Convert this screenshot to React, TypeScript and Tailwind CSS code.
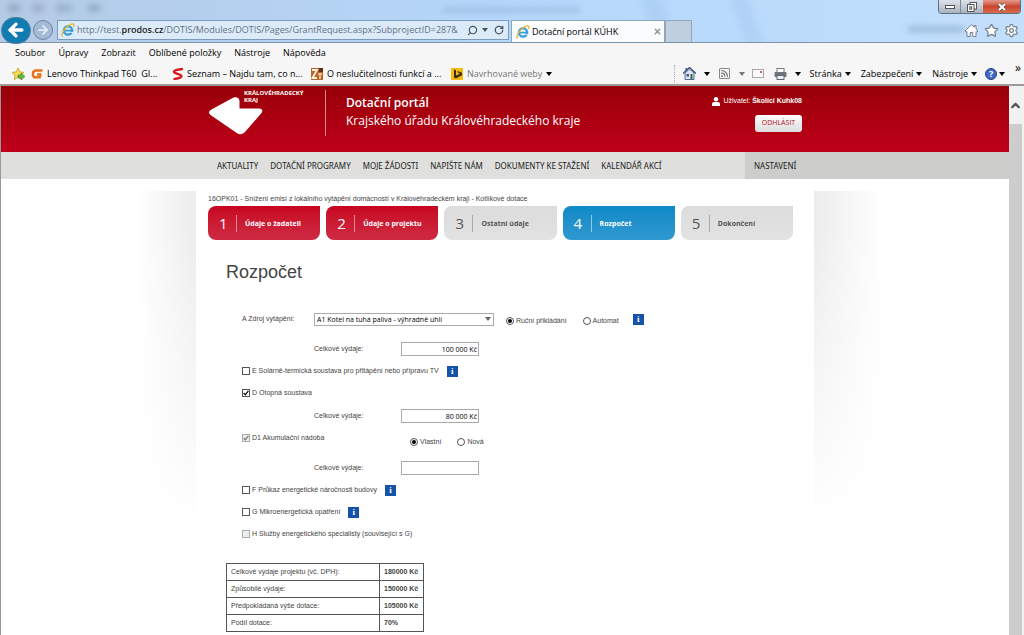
import { useState, type ReactNode } from 'react';
import { ArrowLeft, ArrowRight, Star, Settings, Search, RotateCw, Rss, X, ChevronUp } from 'lucide-react';

const MENU = ['Soubor', 'Úpravy', 'Zobrazit', 'Oblíbené položky', 'Nástroje', 'Nápověda'];
const NAV = ['AKTUALITY', 'DOTAČNÍ PROGRAMY', 'MOJE ŽÁDOSTI', 'NAPIŠTE NÁM', 'DOKUMENTY KE STAŽENÍ', 'KALENDÁŘ AKCÍ'];

const STEPS = [
  { label: 'Údaje o žadateli', state: 'done' },
  { label: 'Údaje o projektu', state: 'done' },
  { label: 'Ostatní údaje', state: 'idle' },
  { label: 'Rozpočet', state: 'current' },
  { label: 'Dokončení', state: 'idle' },
];

const SUMMARY = [
  ['Celkové výdaje projektu (vč. DPH):', '180000 Kč'],
  ['Způsobilé výdaje:', '150000 Kč'],
  ['Předpokládaná výše dotace:', '105000 Kč'],
  ['Podíl dotace:', '70%'],
];

function IeIcon() {
  return (
    <svg viewBox="0 0 14 14" className="h-[14px] w-[14px] shrink-0">
      <circle cx="7" cy="7.4" r="4.1" fill="none" stroke="#3aa0dc" strokeWidth="2.4" />
      <path d="M3.5 7.6h8" stroke="#3aa0dc" strokeWidth="1.8" />
      <path d="M9 9h4v2.2z" fill="#e4eefa" />
      <path d="M1.4 12.8C-.4 10.4 4.6 3.6 9.4 1.4c3-1.3 4.2-.2 3.2 2" fill="none" stroke="#e9b62c" strokeWidth="1.3" strokeLinecap="round" />
    </svg>
  );
}

function Caret({ className = 'text-black' }: { className?: string }) {
  return (
    <svg viewBox="0 0 6 4" className={`h-1 w-[6px] shrink-0 ${className}`}>
      <path d="M0 0h6L3 4z" fill="currentColor" />
    </svg>
  );
}

function WindowControls() {
  return (
    <div className="absolute top-0 right-[3px] flex h-[14px] overflow-hidden rounded-b border border-t-0 border-[#5f6f83]">
      <button aria-label="Minimalizovat" className="flex w-[22px] items-end justify-center border-r border-[#7f8b9a] bg-linear-to-b from-[#dde3ea] to-[#a9b4c2] pb-1">
        <svg viewBox="0 0 10 4" className="h-1 w-[10px]">
          <rect x=".5" y=".5" width="9" height="3" fill="#fff" stroke="#555" />
        </svg>
      </button>
      <button aria-label="Obnovit" className="flex w-[22px] items-center justify-center bg-linear-to-b from-[#dde3ea] to-[#a9b4c2]">
        <svg viewBox="0 0 10 10" className="h-[10px] w-[10px]" fill="#fff" stroke="#555">
          <rect x="3" y=".5" width="6.5" height="6.5" />
          <rect x=".5" y="2.5" width="6.5" height="7" />
          <rect x="2.7" y="4.8" width="2" height="2.4" />
        </svg>
      </button>
      <button aria-label="Zavřít" className="flex w-[37px] items-center justify-center bg-linear-to-b from-[#e39a8b] via-[#c9452c] to-[#d8694f]">
        <svg viewBox="0 0 10 8" className="h-2 w-[10px]">
          <path d="M2 1l6 6M8 1L2 7" stroke="#555" strokeWidth="3.2" />
          <path d="M2 1l6 6M8 1L2 7" stroke="#fff" strokeWidth="2" />
        </svg>
      </button>
    </div>
  );
}

function TitleBar() {
  return (
    <div className="relative flex h-[43px] items-end border-b border-[#7d93a8] bg-linear-to-r from-[#b4cbe6] via-[#b5d7fb] to-[#c2dffc]">
      {/* windows showing through the glass frame */}
      <div aria-hidden="true" className="absolute inset-0 overflow-hidden">
        <div className="absolute top-1 left-2 h-2 w-3 bg-[#71869f] opacity-50 blur-[3px]" />
        <div className="absolute top-1 left-8 h-2 w-3 bg-[#8d90b5] opacity-50 blur-[3px]" />
        <div className="absolute top-1 left-14 h-2 w-4 bg-[#7f96b3] opacity-50 blur-[3px]" />
        <div className="absolute top-1 left-[88px] h-2 w-3 bg-[#71869f] opacity-50 blur-[3px]" />
        <div className="absolute top-2 left-[443px] h-1 w-[137px] bg-[#7d9cc0] opacity-50 blur-[3px]" />
        <div className="absolute top-[27px] left-[908px] h-1 w-[56px] bg-[#6685a6] opacity-60 blur-[3px]" />
        <div className="absolute -top-2 left-[740px] h-16 w-4 -rotate-20 bg-[#9cc3ec] opacity-40 blur-[4px]" />
        <div className="absolute -top-2 left-[650px] h-16 w-5 -rotate-20 bg-[#9cc3ec] opacity-40 blur-[4px]" />
      </div>

      <button aria-label="Zpět" className="relative mb-[-1px] flex h-[26px] w-[31px] items-center justify-center overflow-visible">
        <span className="flex h-[27px] w-[30px] shrink-0 items-center justify-center rounded-[14px] border border-[#4c7ea0] bg-[#117cb0]">
          <ArrowLeft size={20} strokeWidth={4} className="text-white" />
        </span>
      </button>
      <button aria-label="Vpřed" className="relative mb-[2px] ml-[2px] flex h-5 w-5 items-center justify-center rounded-full border border-[#6d84a0] bg-[#a5bad4]">
        <ArrowRight size={14} strokeWidth={3} className="text-[#e4ecf5]" />
      </button>

      <div className="relative mb-[2px] ml-1 flex h-[20px] w-[452px] items-center border border-[#7f9ab8] bg-[#dcebfa] pr-1 pl-[3px]">
        <IeIcon />
        <div className="relative ml-[2px] h-full flex-1">
          <input
            aria-label="Adresa"
            defaultValue="http://test.prodos.cz/DOTIS/Modules/DOTIS/Pages/GrantRequest.aspx?SubprojectID=287&"
            className="peer h-full w-full bg-transparent text-[9px] text-transparent outline-none focus:text-black"
          />
          <span aria-hidden="true" className="pointer-events-none absolute inset-0 overflow-hidden text-[9px] leading-[18px] whitespace-nowrap text-[#66717d] peer-focus:hidden">
            http://test.<span className="font-semibold text-[#222]">prodos.cz</span>/DOTIS/Modules/DOTIS/Pages/GrantRequest.aspx?SubprojectID=287&amp;
          </span>
        </div>
        <button aria-label="Hledat" className="ml-1 flex items-center gap-1 text-[#4a545f]">
          <Search size={11} strokeWidth={2.5} className="-scale-x-100" />
          <Caret className="text-[#4a545f]" />
        </button>
        <button aria-label="Obnovit stránku" className="ml-[6px] text-[#4a545f]">
          <RotateCw size={10} strokeWidth={3} />
        </button>
      </div>

      <div className="relative ml-[2px] flex h-[22px] w-[154px] items-center border-x border-t border-[#8fa3b8] bg-[#fbfcfe] pr-[2px] pl-1 text-[9px]">
        <IeIcon />
        <span className="ml-[2px] flex-1 whitespace-nowrap">Dotační portál KÚHK</span>
        <button aria-label="Zavřít kartu" className="text-[#8b8b8b]">
          <X size={9} strokeWidth={3.5} />
        </button>
      </div>
      <button aria-label="Nová karta" className="relative h-[22px] w-[27px] border border-b-0 border-[#93a8bd] bg-[#bfcfdf]" />

      <div className="relative mr-[5px] mb-1 ml-auto flex gap-[5px] text-[#77818c]">
        <button aria-label="Domů">
          <svg viewBox="0 0 15 15" className="h-[15px] w-[15px]" fill="white" stroke="currentColor" strokeLinejoin="round">
            <path d="M7.500 1.500L1 8l1.200 1.200.8-.7V13.500h3.200V9.500h2.600v4H12V8.500l.8.700L14 8l-2-2V2.500h-1.800v1.700z" />
          </svg>
        </button>
        <button aria-label="Oblíbené"><Star size={15} strokeWidth={2} fill="white" /></button>
        <button aria-label="Nastavení"><Settings size={15} strokeWidth={2} fill="white" /></button>
      </div>
      <WindowControls />
    </div>
  );
}

function FavoritesBar() {
  return (
    <div className="flex h-[23px] items-center border-b-2 border-[#a09a9a] pr-[3px] pl-[11px] text-[9px] whitespace-nowrap">
      <button aria-label="Přidat k oblíbeným">
        <svg viewBox="0 0 14 14" className="h-[14px] w-[14px]">
          <path d="M7 1l1.8 3.9 4.2.5-3.1 2.9.8 4.2L7 10.4l-3.7 2.1.8-4.2L1 5.4l4.2-.5z" fill="#f6dc52" stroke="#c39a22" strokeWidth=".8" />
          <path d="M7 8h3V6l4 3.5-4 3.5v-2H7z" fill="#63b83c" stroke="#3b8423" strokeWidth=".6" />
        </svg>
      </button>
      <a href="#" className="ml-[6px] flex w-[137px] items-center gap-1">
        <svg viewBox="0 0 12 10" className="h-[10px] w-3">
          <path d="M11.5 1.5H4.3L2 3.2v3.6l1.2 1.4h5.6l.5-2.7H6" fill="none" stroke="#e9731c" strokeWidth="2.4" />
        </svg>
        <span>Lenovo Thinkpad T60&nbsp; GI...</span>
      </a>
      <a href="#" className="ml-1 flex w-[135px] items-center gap-1">
        <svg viewBox="0 0 11 12" className="h-3 w-[11px]">
          <path d="M10 1C5 1.500 1.500 2.500 2 4.200c.5 1.500 8 2.200 7.500 4.200C9.100 10 5.500 10.500 2.500 11" fill="none" stroke="#d8151c" strokeWidth="2.300" strokeLinecap="round" />
        </svg>
        <span>Seznam – Najdu tam, co n...</span>
      </a>
      <a href="#" className="ml-1 flex w-[137px] items-center gap-1">
        <svg viewBox="0 0 12 12" className="h-3 w-3">
          <rect width="12" height="12" fill="#b9652a" />
          <path d="M1 2h5L1.500 10H6" stroke="#fbeedd" strokeWidth="1.800" fill="none" />
          <path d="M7 6h4M9 6v5" stroke="#f3d3ae" strokeWidth="1.500" />
          <rect x="8" y="0" width="4" height="4" fill="#5b3015" />
        </svg>
        <span>O neslučitelnosti funkcí a ...</span>
      </a>
      <button className="ml-[3px] flex items-center gap-1 text-[#777]">
        <svg viewBox="0 0 12 12" className="h-3 w-3">
          <rect width="12" height="12" fill="#f5bb12" />
          <path d="M3 1.500l2 .8v5.200l4-1.800-2-.9-.6-1.700L11 4.800v2.400L5 10.600 3 9.400z" fill="#3b3014" />
        </svg>
        <span>Navrhované weby</span>
        <Caret />
      </button>

      <div className="ml-auto flex h-[18px] items-center border-l border-dotted border-[#aaa] pl-2">
        <button aria-label="Domovská stránka" className="flex items-center gap-2">
          <svg viewBox="0 0 13 13" className="h-[13px] w-[13px]">
            <path d="M2 6v6.500h9V6L6.500 2z" fill="#dfe6f2" stroke="#47598a" strokeWidth=".9" />
            <path d="M2.500 4.500V1h1.500v2" fill="#47598a" />
            <path d="M0 6.500L6.500.5l6.500 6" fill="none" stroke="#47598a" strokeWidth="1.400" />
            <rect x="3.500" y="7" width="2.500" height="2.500" fill="#3a4f91" />
            <rect x="7.500" y="7" width="2" height="5.500" fill="#2f6f3f" />
          </svg>
          <Caret />
        </button>
        <button aria-label="Informační kanály" className="ml-[9px] flex items-center gap-[9px] text-[#777]">
          <span className="rounded-[1px] border border-[#888]"><Rss size={9} strokeWidth={3} /></span>
          <Caret className="text-[#777]" />
        </button>
        <button aria-label="Pošta" className="ml-[7px]">
          <svg viewBox="0 0 12 9" className="h-[9px] w-3">
            <rect x=".5" y=".5" width="11" height="8" fill="#fafafa" stroke="#a9a9a9" />
            <rect x="8" y="2" width="2" height="2" fill="#c66" />
          </svg>
        </button>
        <button aria-label="Tisk" className="ml-[10px] flex items-center gap-2">
          <svg viewBox="0 0 13 12" className="h-3 w-[13px]">
            <rect x="3" y=".5" width="7" height="4" fill="#fff" stroke="#777" />
            <rect x=".5" y="4" width="12" height="5" rx="1" fill="#6f7478" />
            <rect x="3" y="7.500" width="7" height="4" fill="#e8f0f4" stroke="#667" />
          </svg>
          <Caret />
        </button>
        <button className="ml-[9px] flex items-center gap-[3px]">Stránka <Caret /></button>
        <button className="ml-[10px] flex items-center gap-[3px]">Zabezpečení <Caret /></button>
        <button className="ml-[10px] flex items-center gap-[3px]">Nástroje <Caret /></button>
        <button aria-label="Nápověda k aplikaci" className="ml-2 flex items-center gap-[2px]">
          <span className="flex h-3 w-3 items-center justify-center rounded-full border border-[#26458f] bg-[#3f69c4] text-[9px] font-bold text-white">?</span>
          <Caret />
        </button>
        <button aria-label="Více" className="mb-3 ml-[10px] text-[12px] leading-none">»</button>
      </div>
    </div>
  );
}

function PortalHeader() {
  return (
    <header className="flex h-[66px] justify-center bg-linear-to-b from-[#980008] to-[#bf0019] text-white">
      <div className="flex w-[618px] px-3">
        <a href="#" className="mt-1 mb-4 flex w-[118px] border-r border-[#dd8a84]">
          <svg viewBox="0 0 56 40" className="mt-[6px] h-10 w-14 shrink-0">
            <path d="M25.500 1.500Q31 0 31.500 5V12.500H51Q56 13 53.500 17L37 36Q33.500 39.500 29.500 37.500L2.500 19Q-.5 16.500 2.500 14Z" fill="#fff" />
          </svg>
          <span className="-ml-5 text-[6px] leading-[7px] font-bold">KRÁLOVÉHRADECKÝ<br />KRAJ</span>
        </a>
        <h1 className="mt-2 ml-5 text-[12px] leading-[18px] whitespace-nowrap">
          <strong className="block font-semibold">Dotační portál</strong>
          Krajského úřadu Královéhradeckého kraje
        </h1>
        <div className="mt-[9px] ml-auto flex flex-col items-end font-['Liberation_Sans',sans-serif]">
          <p className="flex items-center gap-[3px] text-[7px] leading-3 whitespace-nowrap">
            <svg viewBox="0 0 8 9" className="h-[9px] w-2" fill="#fff">
              <circle cx="4" cy="2.300" r="2.200" />
              <path d="M0 9V7q0-2 2-2h4q2 0 2 2v2z" />
            </svg>
            <span>Uživatel: <strong>Školící Kuhk08</strong></span>
          </p>
          <button className="mt-2 h-[17px] w-[47px] rounded-[3px] bg-linear-to-b from-white to-[#dcdcdc] font-['Open_Sans',sans-serif] text-[7px] text-[#b00c1c]">
            ODHLÁSIT
          </button>
        </div>
      </div>
    </header>
  );
}

function PortalNav() {
  return (
    <nav className="flex h-[27px] bg-[#dfdfdd] font-['Noto_Sans',sans-serif] text-[8px] whitespace-nowrap text-[#222]">
      <div className="flex-1" />
      <div className="flex w-[618px] items-center pl-[21px]">
        <div className="flex gap-3">
          {NAV.map((item) => (
            <a key={item} href="#">{item}</a>
          ))}
        </div>
        <a href="#" className="ml-auto flex h-full w-[69px] items-center bg-[#cdcdcc] pl-[9px]">NASTAVENÍ</a>
      </div>
      <div className="flex-1 bg-[#cdcdcc]" />
    </nav>
  );
}

function Step({ number, label, state }: { number: number; label: string; state: string }) {
  const color =
    state === 'done'
      ? 'from-[#c70420] to-[#cf2943] text-white'
      : state === 'current'
      ? 'from-[#0d89c7] to-[#2f99d0] text-white'
      : 'from-[#dcdcdc] to-[#e2e2e2] text-[#555]';
  return (
    <a href="#" className={`flex h-[34px] flex-1 items-center rounded-lg rounded-tr-none bg-linear-to-b pl-[11px] ${color}`}>
      <span className="w-[17px] text-[15px]">{number}</span>
      <span className={`h-[17px] border-l pl-2 text-[7px] leading-[17px] font-bold whitespace-nowrap ${state === 'idle' ? 'border-[#aaa]' : 'border-white/50'}`}>
        {label}
      </span>
    </a>
  );
}

function InfoButton() {
  return (
    <button type="button" aria-label="Informace" className="flex h-[11px] w-[11px] items-center justify-center bg-[#1552a8] font-['Liberation_Serif',serif] text-[9px] leading-none font-bold text-white">
      i
    </button>
  );
}

function Check({ label, checked, disabled, info }: { label: string; checked?: boolean; disabled?: boolean; info?: boolean }) {
  return (
    <div className="flex h-[22px] items-center gap-2">
      <label className="flex items-center gap-[2px]">
        <span className="relative flex">
          <input
            type="checkbox"
            defaultChecked={checked}
            disabled={disabled}
            className="peer h-2 w-2 appearance-none border border-[#555] bg-white disabled:border-[#aaa] disabled:bg-[#eee]"
          />
          <svg viewBox="0 0 8 8" className="pointer-events-none absolute inset-0 hidden h-2 w-2 text-black peer-checked:block peer-disabled:text-[#777]">
            <path d="M1.700 4l1.600 1.900L6.400 1.900" fill="none" stroke="currentColor" strokeWidth="1.200" />
          </svg>
        </span>
        {label}
      </label>
      {info && <InfoButton />}
    </div>
  );
}

function Radio({ name, label, checked }: { name: string; label: string; checked?: boolean }) {
  return (
    <label className="flex items-center gap-[2px]">
      <input
        type="radio"
        name={name}
        defaultChecked={checked}
        className="h-2 w-2 appearance-none rounded-full border border-[#555] bg-white checked:bg-black checked:bg-clip-content checked:p-[1px]"
      />
      {label}
    </label>
  );
}

function Expense({ id, value, children }: { id: string; value: string; children?: ReactNode }) {
  const [amount, setAmount] = useState(value);
  return (
    <div className="flex h-[22px] items-center pl-[72px]">
      <label htmlFor={id} className="w-[87px]">Celkové výdaje:</label>
      <input
        id={id}
        value={amount}
        onChange={(e) => setAmount(e.target.value)}
        className="h-[14px] w-[78px] border border-[#aaa] bg-white pr-[1px] text-right font-['Open_Sans',sans-serif] text-[7px] text-black"
      />
      {children}
    </div>
  );
}

function BudgetForm() {
  return (
    <form className="mt-5 pl-[34px] whitespace-nowrap">
      <div className="flex h-[30px] items-center">
        <label htmlFor="source" className="w-[72px]">A Zdroj vytápění:</label>
        <div className="relative">
          <select id="source" className="block h-[13px] w-[180px] appearance-none border border-[#aaa] bg-white pl-[2px] font-['Open_Sans',sans-serif] text-[7px] leading-[11px] text-black">
            <option>A1 Kotel na tuhá paliva - výhradně uhlí</option>
          </select>
          <span className="pointer-events-none absolute top-1 right-[3px] flex"><Caret className="text-[#666]" /></span>
        </div>
        <div className="mt-1 ml-3 flex gap-4">
          <Radio name="feeding" label="Ruční přikládání" checked />
          <Radio name="feeding" label="Automat" />
        </div>
        <div className="ml-[14px]"><InfoButton /></div>
      </div>
      <div className="mt-1"><Expense id="expense-a" value="100 000 Kč" /></div>
      <Check label="E Solárně-termická soustava pro přitápění nebo přípravu TV" info />
      <Check label="D Otopná soustava" checked />
      <div className="mt-[1px]"><Expense id="expense-d" value="80 000 Kč" /></div>
      <div className="flex">
        <div className="w-[168px]"><Check label="D1 Akumulační nádoba" checked disabled /></div>
        <div className="mt-2 flex items-center gap-4">
          <Radio name="tank" label="Vlastní" checked />
          <Radio name="tank" label="Nová" />
        </div>
      </div>
      <div className="mt-2"><Expense id="expense-d1" value="" /></div>
      <Check label="F Průkaz energetické náročnosti budovy" info />
      <Check label="G Mikroenergetická opatření" info />
      <Check label="H Služby energetického specialisty (související s G)" disabled />
    </form>
  );
}

export default function App() {
  return (
    <div className="flex h-screen flex-col overflow-hidden bg-[#f6f6f6] font-['Open_Sans',sans-serif] text-black">
      <TitleBar />
      <div className="flex h-5 shrink-0 items-center gap-[13px] pl-[15px] text-[9px] whitespace-nowrap">
        {MENU.map((item) => (
          <button key={item}>{item}</button>
        ))}
      </div>
      <FavoritesBar />

      <div className="flex min-h-0 flex-1 border-l border-[#999]">
        <div className="min-w-0 flex-1 overflow-hidden bg-white">
          <PortalHeader />
          <PortalNav />
          <div className="mt-3 flex">
            <div className="h-[340px] flex-1 bg-linear-to-l from-[#ececec] to-white to-30% mask-b-from-10% mask-b-to-100%" />
            <main className="w-[618px] px-3 font-['Liberation_Sans',sans-serif] text-[7px] text-[#444]">
              <p className="leading-[15px] text-[#444]">
                16OPK01 - Snížení emisí z lokálního vytápění domácností v Královéhradeckém kraji - Kotlíkové dotace
              </p>
              <div className="mr-[9px] flex gap-[6px] font-['Open_Sans',sans-serif]">
                {STEPS.map((step, i) => (
                  <Step key={step.label} number={i + 1} label={step.label} state={step.state} />
                ))}
              </div>
              <h2 className="mt-5 ml-[18px] text-[18px] leading-6 text-[#444]">Rozpočet</h2>
              <BudgetForm />
              <table className="mt-[18px] ml-[18px] w-[198px] border-collapse border border-[#555]">
                <tbody>
                  {SUMMARY.map(([label, value]) => (
                    <tr key={label} className="h-[17px]">
                      <th scope="row" className="w-[153px] border border-[#555] pl-1 text-left font-normal">{label}</th>
                      <td className="border border-[#555] pl-1 font-bold whitespace-nowrap">{value}</td>
                    </tr>
                  ))}
                </tbody>
              </table>
            </main>
            <div className="h-[340px] flex-1 bg-linear-to-r from-[#ececec] to-white to-35% mask-b-from-10% mask-b-to-100%" />
          </div>
        </div>
        <div className="flex w-[15px] flex-col bg-[#f1f1f1] pr-[2px]">
          <button aria-label="Posunout nahoru" className="flex h-[38px] items-center justify-center text-[#555]">
            <ChevronUp size={13} strokeWidth={4} />
          </button>
          <div className="flex-1 bg-[#cdcdcd]" />
        </div>
      </div>
    </div>
  );
}
